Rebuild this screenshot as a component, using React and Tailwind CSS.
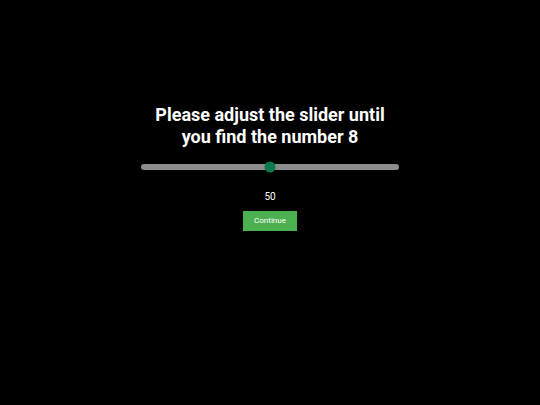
import React, { useState } from "react";

export default function App() {
  const [value] = useState(50);

  return (
    <div className="min-h-[405px] w-full bg-black text-white" style={{ fontFamily: "Roboto, 'Liberation Sans', sans-serif" }}>
      <main className="flex flex-col items-center pt-[104px]">
        <h1 className="w-[258px] text-center text-[18px] font-bold leading-[22px]">
          Please adjust the slider until you find the number 8
        </h1>

        <div className="relative mt-[16px] h-[6px] w-[258px] rounded-full bg-[#8c8c8c]">
          <div
            className="absolute top-1/2 h-[11px] w-[11px] -translate-x-1/2 -translate-y-1/2 rounded-full bg-[#0b7a4b]"
            style={{ left: `${value}%` }}
          />
        </div>

        <p className="mt-[21px] text-[10px] leading-[12px]">{value}</p>

        <button className="mt-[8px] h-[20px] w-[54px] bg-[#4caf50] text-[8px] text-white">
          Continue
        </button>
      </main>
    </div>
  );
}
